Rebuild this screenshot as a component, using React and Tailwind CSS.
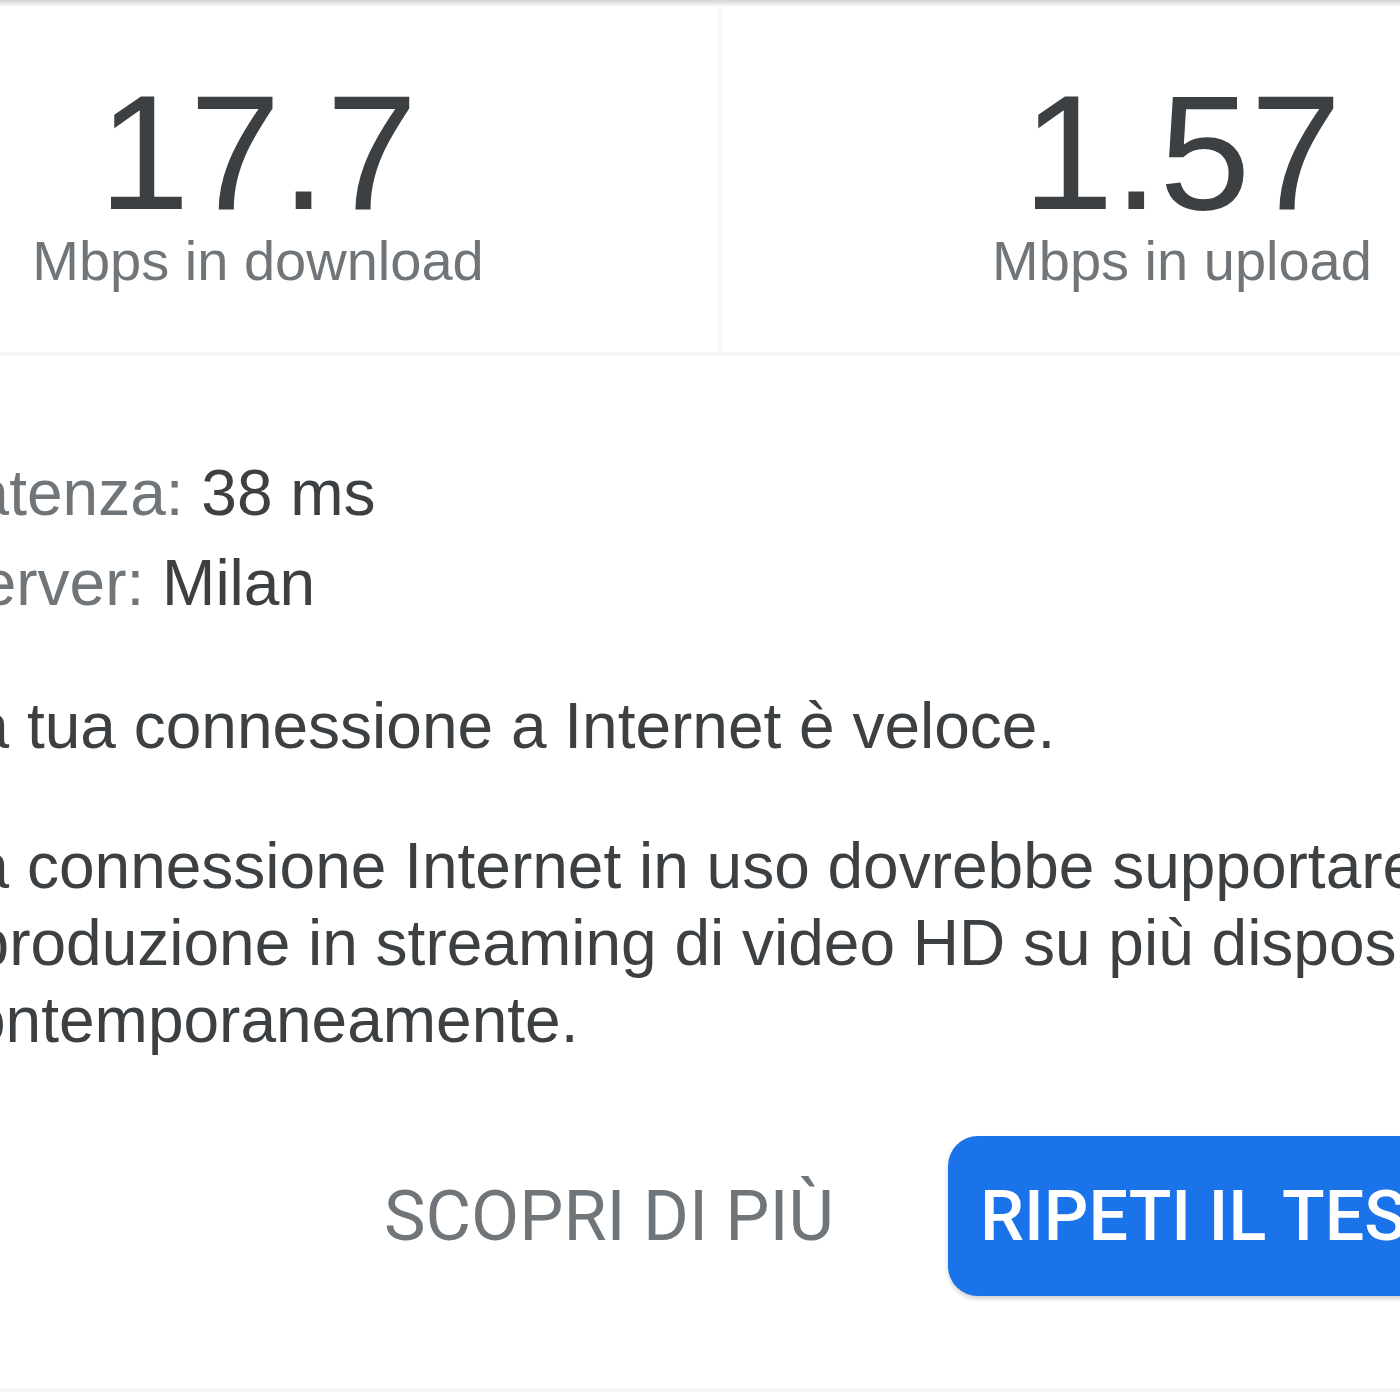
import React from "react";

const SpeedResult = ({ value, label }) => (
  <div className="flex flex-col items-center pt-[71px] pb-[59px]">
    <div className="text-[164px] leading-[150px] text-[#3c4043]">{value}</div>
    <div className="mt-[1px] text-[56px] leading-[64px] text-[#70757a]">{label}</div>
  </div>
);

const App = () => {
  return (
    <div
      className="w-[1400px] h-[1400px] overflow-hidden bg-white"
      style={{ fontFamily: '"Liberation Sans", Arial, sans-serif' }}
    >
      {/* top edge shadow */}
      <div className="h-[7px] bg-linear-to-b from-[#d2d2d2] to-white" />

      <div className="ml-[-202px] w-[1844px]">
        {/* download / upload */}
        <div className="grid grid-cols-[920px_4px_920px] border-b-4 border-[#f6f6f6]">
          <SpeedResult value="17.7" label="Mbps in download" />
          <div className="bg-[#f7f7f7]" />
          <SpeedResult value="1.57" label="Mbps in upload" />
        </div>

        <div className="pl-[140px] pr-[100px] pt-[92px] pb-[92px] border-b-4 border-[#f6f6f6]">
          {/* latency / server */}
          <div className="text-[64px] leading-[90px]">
            <div>
              <span className="text-[#70757a]">Latenza: </span>
              <span className="text-[#3c4043]">38 ms</span>
            </div>
            <div>
              <span className="text-[#70757a]">Server: </span>
              <span className="text-[#3c4043]">Milan</span>
            </div>
          </div>

          <p className="mt-[60px] text-[64px] leading-[76px] text-[#3c4043]">
            La tua connessione a Internet è veloce.
          </p>

          <p className="mt-[64px] text-[64px] leading-[77px] text-[#3c4043]">
            La connessione Internet in uso dovrebbe supportare la riproduzione in
            streaming di video HD su più dispositivi contemporaneamente.
          </p>

          {/* actions */}
          <div
            className="mt-[77px] ml-[414px] flex items-center gap-[82px]"
            style={{ fontFamily: "Roboto, Arial, sans-serif" }}
          >
            <button
              type="button"
              className="h-[160px] px-[32px] text-[70px] text-[#70757a] whitespace-nowrap"
            >
              SCOPRI DI PIÙ
            </button>
            <button
              type="button"
              className="h-[160px] px-[32px] rounded-[30px] bg-[#1a73e8] text-[70px] font-medium text-white whitespace-nowrap shadow-[0_3px_4px_rgba(0,0,0,0.18)]"
            >
              RIPETI IL TEST
            </button>
          </div>
        </div>
      </div>
    </div>
  );
};

export default App;
